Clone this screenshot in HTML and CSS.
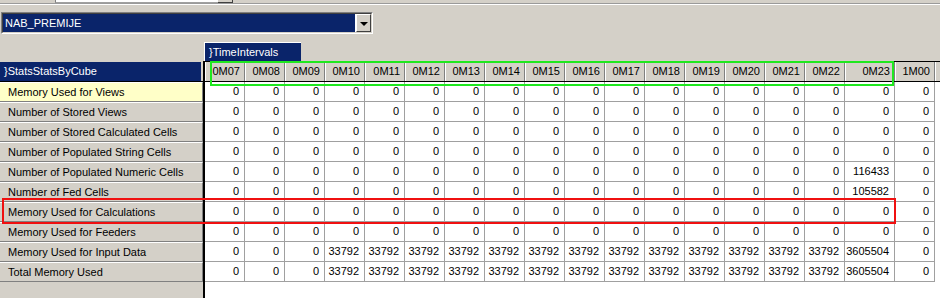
FILE: index.html
```html
<!DOCTYPE html>
<html>
<head>
<meta charset="utf-8">
<link rel="stylesheet" href="styles.css">
</head>
<body>
<div class="top"><div class="top-input"></div><div class="top-btn"></div></div>
<div class="sep"></div>
<div class="combo">
  <div class="combo-in">
    <div class="combo-field">NAB_PREMIJE</div>
    <div class="combo-btn"><span class="tri"></span></div>
  </div>
</div>
<div class="tabrow"><div class="tab">}TimeIntervals</div></div>
<div class="main">
  <div class="rowpane">
    <div class="rowtitle-wrap"><div class="rowtitle">}StatsStatsByCube</div></div>
    <div class="rh sel">Memory Used for Views</div>
    <div class="rh">Number of Stored Views</div>
    <div class="rh">Number of Stored Calculated Cells</div>
    <div class="rh">Number of Populated String Cells</div>
    <div class="rh">Number of Populated Numeric Cells</div>
    <div class="rh">Number of Fed Cells</div>
    <div class="rh">Memory Used for Calculations</div>
    <div class="rh">Memory Used for Feeders</div>
    <div class="rh">Memory Used for Input Data</div>
    <div class="rh">Total Memory Used</div>
  </div>
  <div class="data">
    <div class="hrow"><span>0M07</span><span>0M08</span><span>0M09</span><span>0M10</span><span>0M11</span><span>0M12</span><span>0M13</span><span>0M14</span><span>0M15</span><span>0M16</span><span>0M17</span><span>0M18</span><span>0M19</span><span>0M20</span><span>0M21</span><span>0M22</span><span>0M23</span><span>1M00</span><span class="fill"></span></div>
    <div class="drow"><span>0</span><span>0</span><span>0</span><span>0</span><span>0</span><span>0</span><span>0</span><span>0</span><span>0</span><span>0</span><span>0</span><span>0</span><span>0</span><span>0</span><span>0</span><span>0</span><span>0</span><span>0</span><span class="fill"></span></div>
    <div class="drow"><span>0</span><span>0</span><span>0</span><span>0</span><span>0</span><span>0</span><span>0</span><span>0</span><span>0</span><span>0</span><span>0</span><span>0</span><span>0</span><span>0</span><span>0</span><span>0</span><span>0</span><span>0</span><span class="fill"></span></div>
    <div class="drow"><span>0</span><span>0</span><span>0</span><span>0</span><span>0</span><span>0</span><span>0</span><span>0</span><span>0</span><span>0</span><span>0</span><span>0</span><span>0</span><span>0</span><span>0</span><span>0</span><span>0</span><span>0</span><span class="fill"></span></div>
    <div class="drow"><span>0</span><span>0</span><span>0</span><span>0</span><span>0</span><span>0</span><span>0</span><span>0</span><span>0</span><span>0</span><span>0</span><span>0</span><span>0</span><span>0</span><span>0</span><span>0</span><span>0</span><span>0</span><span class="fill"></span></div>
    <div class="drow"><span>0</span><span>0</span><span>0</span><span>0</span><span>0</span><span>0</span><span>0</span><span>0</span><span>0</span><span>0</span><span>0</span><span>0</span><span>0</span><span>0</span><span>0</span><span>0</span><span>116433</span><span>0</span><span class="fill"></span></div>
    <div class="drow"><span>0</span><span>0</span><span>0</span><span>0</span><span>0</span><span>0</span><span>0</span><span>0</span><span>0</span><span>0</span><span>0</span><span>0</span><span>0</span><span>0</span><span>0</span><span>0</span><span>105582</span><span>0</span><span class="fill"></span></div>
    <div class="drow"><span>0</span><span>0</span><span>0</span><span>0</span><span>0</span><span>0</span><span>0</span><span>0</span><span>0</span><span>0</span><span>0</span><span>0</span><span>0</span><span>0</span><span>0</span><span>0</span><span>0</span><span>0</span><span class="fill"></span></div>
    <div class="drow"><span>0</span><span>0</span><span>0</span><span>0</span><span>0</span><span>0</span><span>0</span><span>0</span><span>0</span><span>0</span><span>0</span><span>0</span><span>0</span><span>0</span><span>0</span><span>0</span><span>0</span><span>0</span><span class="fill"></span></div>
    <div class="drow"><span>0</span><span>0</span><span>0</span><span>33792</span><span>33792</span><span>33792</span><span>33792</span><span>33792</span><span>33792</span><span>33792</span><span>33792</span><span>33792</span><span>33792</span><span>33792</span><span>33792</span><span>33792</span><span>3605504</span><span>0</span><span class="fill"></span></div>
    <div class="drow"><span>0</span><span>0</span><span>0</span><span>33792</span><span>33792</span><span>33792</span><span>33792</span><span>33792</span><span>33792</span><span>33792</span><span>33792</span><span>33792</span><span>33792</span><span>33792</span><span>33792</span><span>33792</span><span>3605504</span><span>0</span><span class="fill"></span></div>
  </div>
</div>
<div class="mark-green"></div>
<div class="mark-red"></div>
</body>
</html>
```
FILE: styles.css
```css
html, body {
  margin: 0;
  padding: 0;
}
body {
  position: relative;
  width: 940px;
  height: 298px;
  overflow: hidden;
  background: #d4d0c8;
  font-family: "Liberation Sans", Arial, sans-serif;
  font-size: 11px;
  color: #000;
}
.top {
  display: flex;
  height: 3px;
}
.top-input {
  margin-left: 55px;
  width: 163px;
  box-sizing: border-box;
  background: #fff;
  border-left: 1px solid #808080;
  border-bottom: 1px solid #a0a0a0;
}
.top-btn {
  width: 15px;
  background: #d4d0c8;
  border-bottom: 1px solid #404040;
  border-right: 1px solid #404040;
  box-sizing: border-box;
}
.sep {
  height: 0;
  border-top: 1px solid #9a9a9a;
  border-bottom: 1px solid #fff;
  margin-bottom: 7px;
}
.combo {
  margin-left: 1px;
  width: 372px;
  height: 22px;
  box-sizing: border-box;
  border-top: 1px solid #808080;
  border-left: 1px solid #808080;
  border-right: 1px solid #fff;
  border-bottom: 1px solid #fff;
}
.combo-in {
  display: flex;
  height: 100%;
  box-sizing: border-box;
  border-top: 1px solid #404040;
  border-left: 1px solid #404040;
  border-right: 1px solid #d4d0c8;
  border-bottom: 1px solid #d4d0c8;
}
.combo-field {
  flex: 1;
  background: #0a246a;
  color: #fff;
  line-height: 18px;
  padding-left: 2px;
  border-right: 1px solid #fff;
}
.combo-btn {
  width: 15px;
  box-sizing: border-box;
  background: #d4d0c8;
  border-top: 1px solid #fff;
  border-left: 1px solid #fff;
  border-right: 1px solid #404040;
  border-bottom: 1px solid #404040;
  display: flex;
  align-items: center;
  justify-content: center;
}
.tri {
  width: 0;
  height: 0;
  border-left: 4px solid transparent;
  border-right: 4px solid transparent;
  border-top: 4px solid #000;
  margin-top: 1px;
}
.tabrow {
  margin-top: 8px;
  height: 19px;
  display: flex;
}
.tab {
  margin-left: 204px;
  width: 97px;
  box-sizing: border-box;
  background: #0a246a;
  color: #fff;
  line-height: 18px;
  padding-left: 4px;
  border-top: 1px solid #fff;
  border-left: 1px solid #fff;
}
.main {
  display: flex;
  height: 240px;
}
.rowpane {
  width: 203px;
  border-right: 2px solid #000;
  flex: none;
}
.rowtitle-wrap {
  padding-top: 1px;
  border-bottom: 1px solid #000;
}
.rowtitle {
  width: 201px;
  height: 19px;
  line-height: 19px;
  background: #0a246a;
  color: #fff;
  padding-left: 4px;
  box-sizing: border-box;
}
.rh {
  height: 20px;
  box-sizing: border-box;
  border-top: 1px solid #fff;
  border-bottom: 1px solid #808080;
  border-right: 1px solid #808080;
  line-height: 18px;
  padding-left: 8px;
  white-space: nowrap;
}
.rh.sel {
  background: #ffffc8;
}
.data {
  flex: 1;
  background: #fff;
}
.hrow, .drow {
  display: grid;
  grid-template-columns: repeat(16, 40px) 50px 40px 1fr;
}
.hrow {
  border-top: 1px solid #000;
  border-bottom: 1px solid #000;
  background: #d4d0c8;
}
.hrow span {
  height: 19px;
  line-height: 19px;
  box-sizing: border-box;
  border-left: 1px solid #fff;
  border-right: 1px solid #808080;
  text-align: right;
  padding-right: 4px;
}
.drow span {
  height: 20px;
  line-height: 19px;
  box-sizing: border-box;
  border-right: 1px solid #a0a0a0;
  border-bottom: 1px solid #a0a0a0;
  text-align: right;
  padding-right: 5px;
}
.hrow span.fill {
  border-right: none;
}
.drow span.fill {
  border-right: none;
  border-bottom: none;
}
.mark-green {
  position: absolute;
  left: 210px;
  top: 61px;
  width: 684px;
  height: 25px;
  box-sizing: border-box;
  border: 2px solid #1fe81f;
}
.mark-red {
  position: absolute;
  left: 2px;
  top: 198px;
  width: 894px;
  height: 26px;
  box-sizing: border-box;
  border: 2px solid #f01010;
}
```
